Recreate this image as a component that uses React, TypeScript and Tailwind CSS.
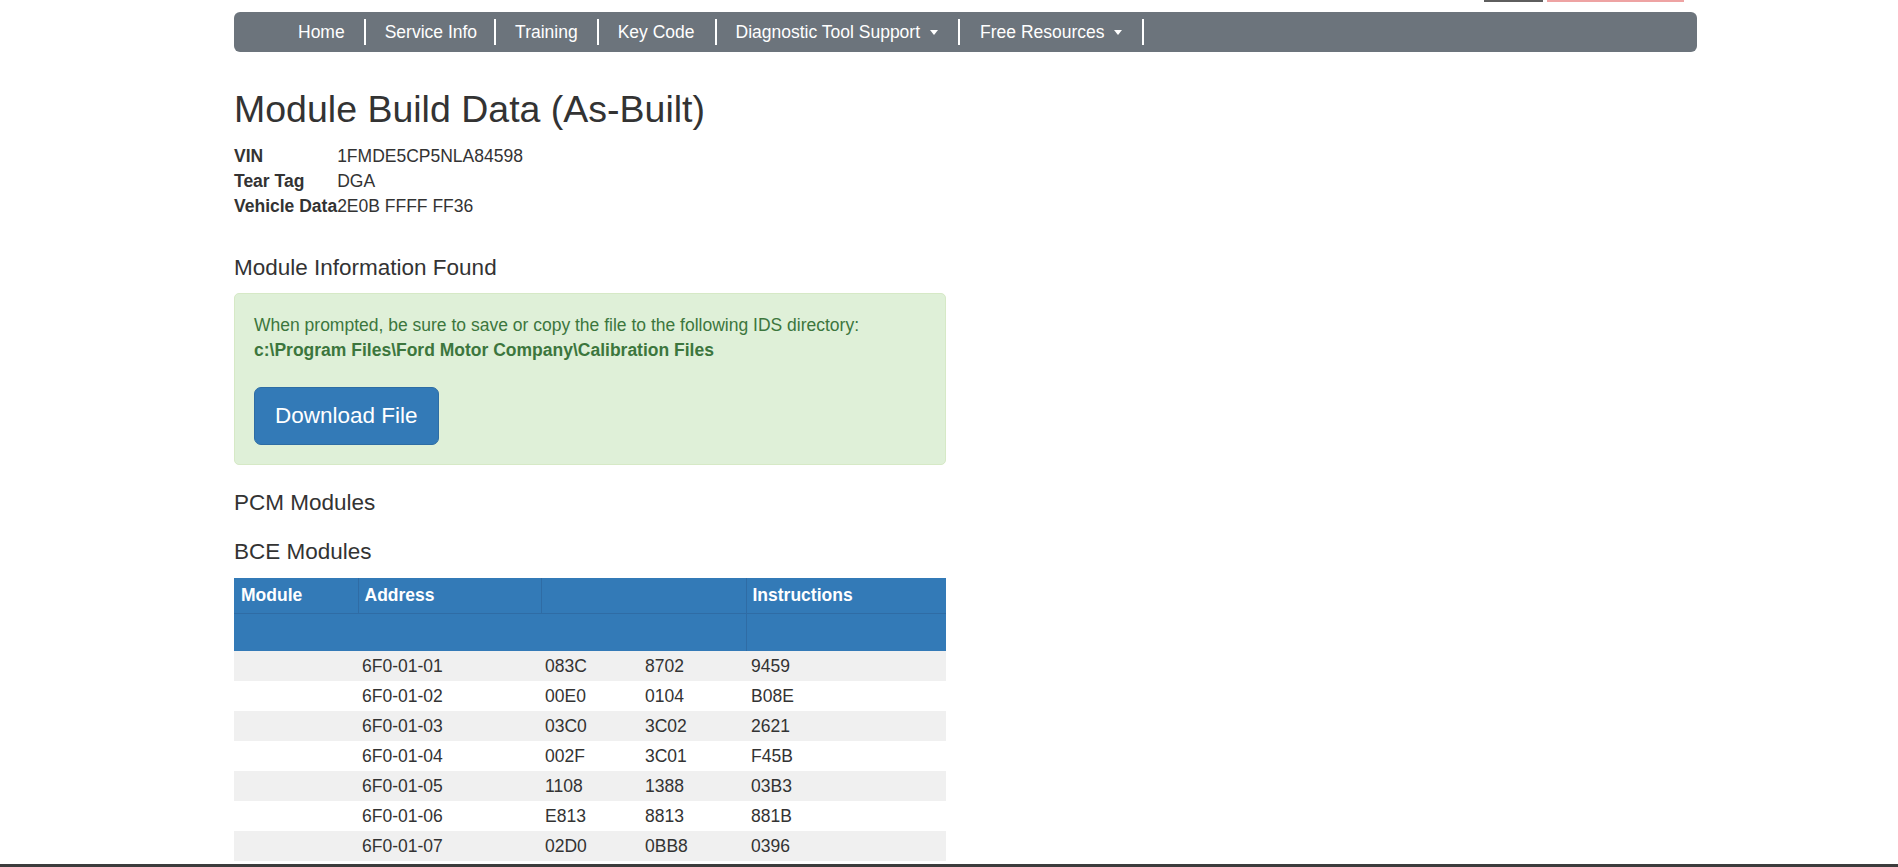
import React from "react";

const navItems: { label: string; caret?: boolean; cls: string; caretCls?: string }[] = [
  { label: "Home", cls: "pl-[20px] pr-[19px]" },
  { label: "Service Info", cls: "pl-[19px] pr-[17px]" },
  { label: "Training", cls: "pl-[19px] pr-[19px]" },
  { label: "Key Code", cls: "pl-[19px] pr-[20px]" },
  { label: "Diagnostic Tool Support", caret: true, cls: "pl-[19px] pr-[20px]", caretCls: "ml-[10px]" },
  { label: "Free Resources", caret: true, cls: "pl-[20px] pr-[20px]", caretCls: "ml-[9px]" },
];

const rows: [string, string, string, string][] = [
  ["6F0-01-01", "083C", "8702", "9459"],
  ["6F0-01-02", "00E0", "0104", "B08E"],
  ["6F0-01-03", "03C0", "3C02", "2621"],
  ["6F0-01-04", "002F", "3C01", "F45B"],
  ["6F0-01-05", "1108", "1388", "03B3"],
  ["6F0-01-06", "E813", "8813", "881B"],
  ["6F0-01-07", "02D0", "0BB8", "0396"],
];

export default function App() {
  return (
    <div
      className="flex h-[867px] w-full flex-col overflow-hidden bg-white text-[#333333]"
      style={{ fontFamily: '"Liberation Sans", Arial, Helvetica, sans-serif' }}
    >
      <div className="flex-1 overflow-hidden">
        <div className="ml-[234px] w-[1463px]">
          {/* top cut-off buttons */}
          <div className="flex h-[2px] justify-end gap-[4px] pr-[13px]">
            <div className="h-[2px] w-[59px] bg-[#5e5e5e]" />
            <div className="h-[2px] w-[137px] bg-[#eea3a3]" />
          </div>

          {/* navbar */}
          <nav className="mt-[10px] flex h-[40px] items-center rounded-[6px] bg-[#6c747c] pl-[44px]">
            {navItems.map((item) => (
              <div
                key={item.label}
                className={`flex h-[26px] items-center border-r-2 border-white text-[17.5px] leading-[25px] text-white ${item.cls}`}
              >
                <span>{item.label}</span>
                {item.caret && (
                  <span
                    className={`inline-block h-0 w-0 border-x-[4px] border-t-[5px] border-x-transparent border-t-white ${item.caretCls}`}
                  />
                )}
              </div>
            ))}
          </nav>

          <div className="w-[712px]">
            <h2 className="mt-[37px] text-[37.5px] font-normal leading-[41px] text-[#333333]">
              Module Build Data (As-Built)
            </h2>

            <div className="mt-[14px] grid grid-cols-[auto_1fr] text-[17.5px] leading-[25px]">
              <div className="font-bold">VIN</div>
              <div>1FMDE5CP5NLA84598</div>
              <div className="font-bold">Tear Tag</div>
              <div>DGA</div>
              <div className="font-bold">Vehicle Data</div>
              <div>2E0B FFFF FF36</div>
            </div>

            <h4 className="mt-[36px] text-[22.5px] leading-[25px]">Module Information Found</h4>

            <div className="mt-[13px] rounded-[5px] border border-[#d6e9c6] bg-[#dff0d8] p-[19px] text-[17.5px] leading-[25px] text-[#3c763d]">
              <div>When prompted, be sure to save or copy the file to the following IDS directory:</div>
              <div className="font-bold">c:\Program Files\Ford Motor Company\Calibration Files</div>
              <button className="mt-[24px] flex h-[58px] items-center rounded-[7px] border border-[#2e6da4] bg-[#337ab7] px-[20px] text-[22.5px] leading-[30px] text-white">
                Download File
              </button>
            </div>

            <h4 className="mt-[25px] text-[22.5px] leading-[25px]">PCM Modules</h4>
            <h4 className="mt-[24px] text-[22.5px] leading-[25px]">BCE Modules</h4>

            <table className="mt-[14px] w-[712px] table-fixed border-collapse text-[17.5px] leading-[25px]">
              <colgroup>
                <col className="w-[124px]" />
                <col className="w-[183px]" />
                <col className="w-[100px]" />
                <col className="w-[105px]" />
                <col className="w-[200px]" />
              </colgroup>
              <thead>
                <tr className="h-[35px] bg-[#337ab7] text-white">
                  <th className="border-r border-b border-[#2f6ca5] pl-[7px] text-left font-bold">Module</th>
                  <th className="border-r border-b border-[#2f6ca5] pl-[6px] text-left font-bold">Address</th>
                  <th colSpan={2} className="border-r border-b border-[#2f6ca5]" />
                  <th className="border-b border-[#2f6ca5] pl-[6px] text-left font-bold">Instructions</th>
                </tr>
                <tr className="h-[38px] bg-[#337ab7]">
                  <th colSpan={4} className="border-r border-[#2f6ca5]" />
                  <th />
                </tr>
              </thead>
              <tbody>
                {rows.map((r, i) => (
                  <tr key={r[0]} className={i % 2 === 0 ? "h-[30px] bg-[#f0f0f0]" : "h-[30px] bg-white"}>
                    <td />
                    <td className="pl-[4px]">{r[0]}</td>
                    <td className="pl-[4px]">{r[1]}</td>
                    <td className="pl-[4px]">{r[2]}</td>
                    <td className="pl-[5px]">{r[3]}</td>
                  </tr>
                ))}
              </tbody>
            </table>
          </div>
        </div>
      </div>
      <div className="h-[3px] w-full shrink-0 bg-[#3c3c3c]" />
    </div>
  );
}
